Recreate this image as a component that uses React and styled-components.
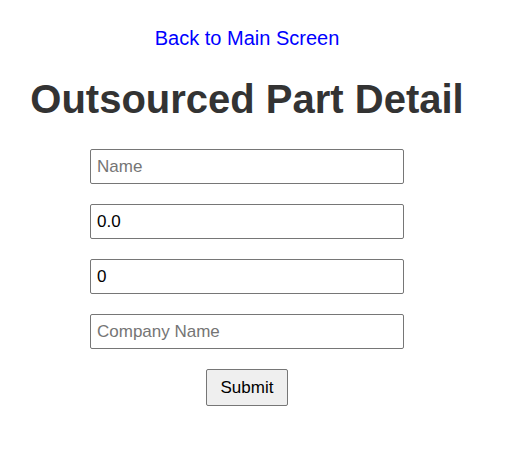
import React from "react";
import styled, { createGlobalStyle } from "styled-components";

const GlobalStyle = createGlobalStyle`
body {
  margin: 0;
  background: #fff;
  font-family: "Liberation Sans", Arial, sans-serif;
}
`;

const Page = styled.div`
width: 494px;
display: flex;
flex-direction: column;
align-items: center;
padding-top: 27px;
`;

const BackLink = styled.a`
color: #0000ff;
font-size: 20px;
text-decoration: none;
line-height: 23px;
`;

const Title = styled.h1`
margin: 26px 0 27px;
color: #333;
font-size: 40px;
font-weight: bold;
line-height: 46px;
`;

const Form = styled.form`
display: flex;
flex-direction: column;
align-items: center;
gap: 20px;
`;

const Field = styled.input`
box-sizing: border-box;
width: 314px;
height: 35px;
padding: 0 6px;
border: 1px solid #767676;
border-radius: 2px;
font-family: "Liberation Sans", Arial, sans-serif;
font-size: 17px;
color: #000;
&::placeholder {
  color: #757575;
}
`;

const SubmitButton = styled.button`
box-sizing: border-box;
width: 82px;
height: 37px;
border: 1px solid #767676;
border-radius: 2px;
background: #efefef;
font-family: "Liberation Sans", Arial, sans-serif;
font-size: 17px;
color: #000;
`;

const App = () => {
  return <>
    <GlobalStyle />
    <Page>
      <BackLink href="#">Back to Main Screen</BackLink>
      <Title>Outsourced Part Detail</Title>
      <Form onSubmit={e => e.preventDefault()}>
        <Field placeholder="Name" />
        <Field defaultValue="0.0" />
        <Field defaultValue="0" />
        <Field placeholder="Company Name" />
        <SubmitButton type="submit">Submit</SubmitButton>
      </Form>
    </Page>
  </>;
};

export default App;
